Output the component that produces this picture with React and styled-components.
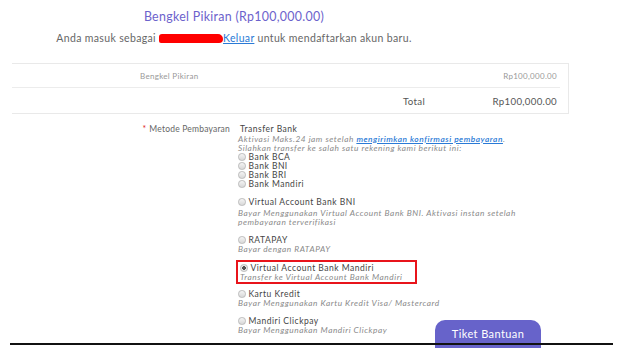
import React from "react";
import styled, { createGlobalStyle } from "styled-components";

const GlobalStyle = createGlobalStyle`
	body {
		margin: 0;
		background: #fff;
		font-family: "Lato", "Noto Sans", sans-serif;
		color: #555;
	}
`;

const Page = styled.div`
	position: relative;
	width: 642px;
	height: 348px;
	overflow: hidden;
`;

const Header = styled.div`
	width: 468px;
	padding-top: 8px;
	text-align: center;

	& h1 {
		margin: 0;
		font-size: 12.4px;
		line-height: 18px;
		font-weight: 400;
		color: #6c62cc;
		letter-spacing: 0.3px;
	}

	& p {
		margin: 5px 0 0;
		font-size: 10.5px;
		line-height: 14px;
		color: #666;
		letter-spacing: 0.35px;
	}
`;

const Redacted = styled.span`
	display: inline-block;
	width: 64px;
	height: 9px;
	vertical-align: -1px;
	background: #ff0000;
	border-radius: 3px 5px 4px 2px;
`;

const Link = styled.a`
	color: #2a7ad6;
	text-decoration: underline;
	font-weight: ${(p) => (p.$bold ? 600 : 400)};
`;

const Summary = styled.div`
	margin: 18px 0 0 12px;
	width: 556px;
	border: 1px solid #e9e9e9;
	border-left: none;
`;

const SummaryRow = styled.div`
	display: flex;
	align-items: center;
	height: ${(p) => p.$h}px;
	margin-right: 8px;
	padding-right: 3px;
	border-bottom: ${(p) => (p.$line ? "1px solid #ececec" : "none")};
	font-size: ${(p) => (p.$total ? 9.7 : 8)}px;
	color: ${(p) => (p.$total ? "#555" : "#999")};
	letter-spacing: 0.3px;

	& span:first-child {
		margin-left: ${(p) => p.$indent}px;
	}
	& span:last-child {
		margin-left: auto;
	}
`;

const Form = styled.div`
	display: grid;
	grid-template-columns: 230px 1fr;
	column-gap: 8px;
	margin-top: 10px;
	font-size: 8.5px;
	line-height: 9px;
	letter-spacing: 0.5px;
`;

const Label = styled.div`
	text-align: right;
	color: #666;
	line-height: 10px;
	letter-spacing: 0.2px;

	& b {
		color: #e02020;
		font-weight: 400;
		margin-right: 3px;
	}
`;

const Options = styled.div`
	display: flex;
	flex-direction: column;
	gap: 9px;
`;

const Option = styled.div`
	width: ${(p) => (p.$picked ? "175px" : "auto")};
	margin: ${(p) => (p.$picked ? "-3px 0 -3px -2px" : "0")};
	padding: ${(p) => (p.$picked ? "2px 0 0 2px" : "0")};
	border: ${(p) => (p.$picked ? "2px solid #e8141b" : "none")};
`;

const Title = styled.div`
	display: flex;
	align-items: center;
	gap: 3px;
	color: #444;
	line-height: ${(p) => (p.$plain ? 10 : 9)}px;
	padding-left: ${(p) => (p.$plain ? "2px" : "0")};
`;

const Desc = styled.div`
	font-style: italic;
	font-size: 8.3px;
	letter-spacing: 0.55px;
	color: #8a8a8a;
	margin-top: ${(p) => p.$top || 0}px;
	max-width: 300px;
`;

const Radio = styled.span`
	display: inline-block;
	box-sizing: border-box;
	width: 7.5px;
	height: 7.5px;
	border-radius: 50%;
	border: 1px solid #bbb;
	background: ${(p) =>
		p.$on
			? "radial-gradient(circle, #555 0 1.6px, #e6e6e6 2px)"
			: "linear-gradient(#f4f4f4, #d8d8d8)"};
`;

const HelpButton = styled.button`
	position: absolute;
	left: 435px;
	top: 320px;
	width: 106px;
	height: 30px;
	border: none;
	border-radius: 10px 10px 0 0;
	background: #6763ca;
	color: #fff;
	font-family: inherit;
	font-size: 11px;
	letter-spacing: 0.4px;
	padding-bottom: 4px;
`;

const BottomEdge = styled.div`
	position: absolute;
	left: 10px;
	top: 343px;
	width: 603px;
	height: 2px;
	background: #111;
`;

const Bank = ({ name }) => (
	<Title>
		<Radio />
		{name}
	</Title>
);

const Method = ({ name, desc, picked, top }) => (
	<Option $picked={picked}>
		<Title>
			<Radio $on={picked} />
			{name}
		</Title>
		<Desc $top={top}>{desc}</Desc>
	</Option>
);

export default function App() {
	return (
		<Page>
			<GlobalStyle />
			<Header>
				<h1>Bengkel Pikiran (Rp100,000.00)</h1>
				<p>
					Anda masuk sebagai <Redacted />
					<Link href="#">Keluar</Link> untuk mendaftarkan akun baru.
				</p>
			</Header>

			<Summary>
				<SummaryRow $h={23} $indent={128} $line>
					<span>Bengkel Pikiran</span>
					<span>Rp100,000.00</span>
				</SummaryRow>
				<SummaryRow $h={25} $indent={391} $total>
					<span>Total</span>
					<span>Rp100,000.00</span>
				</SummaryRow>
			</Summary>

			<Form>
				<Label>
					<b>*</b>Metode Pembayaran
				</Label>
				<Options>
					<div>
						<Title $plain>Transfer Bank</Title>
						<Desc $top={0.5}>
							Aktivasi Maks.24 jam setelah <Link href="#" $bold>mengirimkan konfirmasi pembayaran</Link>.
						</Desc>
						<Desc>Silahkan transfer ke salah satu rekening kami berikut ini:</Desc>
						<Bank name="Bank BCA" />
						<Bank name="Bank BNI" />
						<Bank name="Bank BRI" />
						<Bank name="Bank Mandiri" />
					</div>
					<Method
						name="Virtual Account Bank BNI"
						desc="Bayar Menggunakan Virtual Account Bank BNI. Aktivasi instan setelah pembayaran terverifikasi"
						top={2}
					/>
					<Method name="RATAPAY" desc="Bayar dengan RATAPAY" />
					<Method name="Virtual Account Bank Mandiri" desc="Transfer ke Virtual Account Bank Mandiri" picked />
					<Method name="Kartu Kredit" desc="Bayar Menggunakan Kartu Kredit Visa/ Mastercard" />
					<Method name="Mandiri Clickpay" desc="Bayar Menggunakan Mandiri Clickpay" />
				</Options>
			</Form>

			<HelpButton>Tiket Bantuan</HelpButton>
			<BottomEdge />
		</Page>
	);
}
